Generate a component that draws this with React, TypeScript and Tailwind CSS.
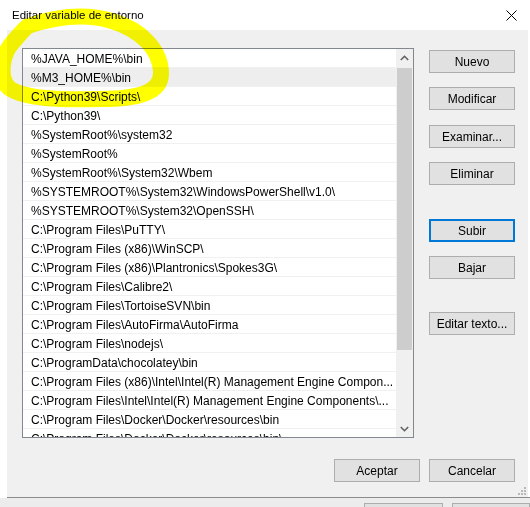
import React from "react";

const rows = [
  "%JAVA_HOME%\\bin",
  "%M3_HOME%\\bin",
  "C:\\Python39\\Scripts\\",
  "C:\\Python39\\",
  "%SystemRoot%\\system32",
  "%SystemRoot%",
  "%SystemRoot%\\System32\\Wbem",
  "%SYSTEMROOT%\\System32\\WindowsPowerShell\\v1.0\\",
  "%SYSTEMROOT%\\System32\\OpenSSH\\",
  "C:\\Program Files\\PuTTY\\",
  "C:\\Program Files (x86)\\WinSCP\\",
  "C:\\Program Files (x86)\\Plantronics\\Spokes3G\\",
  "C:\\Program Files\\Calibre2\\",
  "C:\\Program Files\\TortoiseSVN\\bin",
  "C:\\Program Files\\AutoFirma\\AutoFirma",
  "C:\\Program Files\\nodejs\\",
  "C:\\ProgramData\\chocolatey\\bin",
  "C:\\Program Files (x86)\\Intel\\Intel(R) Management Engine Compon...",
  "C:\\Program Files\\Intel\\Intel(R) Management Engine Components\\...",
  "C:\\Program Files\\Docker\\Docker\\resources\\bin",
  "C:\\Program Files\\Docker\\Docker\\resources\\bin\\",
];

function Btn({ label, focused, className = "" }: { label: string; focused?: boolean; className?: string }) {
  return (
    <div
      className={
        "w-[86px] h-[23px] flex items-center justify-center bg-[#e1e1e1] text-[12px] text-black " +
        (focused ? "border-2 border-[#0078d7] " : "border border-[#adadad] ") +
        className
      }
    >
      {label}
    </div>
  );
}

export default function App() {
  return (
    <div className="relative w-[530px] h-[507px] bg-white overflow-hidden font-['Liberation_Sans',Arial,sans-serif] text-black">
      {/* title bar */}
      <div className="h-[30px] flex items-center justify-between pl-[12px] pr-[12px]">
        <span className="text-[11.5px] leading-none pt-[1px]">Editar variable de entorno</span>
        <svg width="11" height="11" viewBox="0 0 11 11" className="mr-[1px]">
          <path d="M0.5 0.5 L10.5 10.5 M10.5 0.5 L0.5 10.5" stroke="#000" strokeWidth="1" />
        </svg>
      </div>

      {/* body */}
      <div className="relative ml-[7px] w-[521px] h-[467px] bg-[#f0f0f0] flex flex-col pl-[15px] pt-[18px]">
        <div className="flex">
          {/* list box */}
          <div className="w-[392px] h-[390px] border border-[#828790] bg-white flex overflow-hidden">
            <div className="flex-1 flex flex-col overflow-hidden">
              {rows.map((r, i) => (
                <div
                  key={i}
                  className={
                    "h-[19px] shrink-0 border-b border-[#f0f0f0] pl-[8px] flex items-center text-[12px] whitespace-nowrap " +
                    (i === 1 ? "bg-[#eeeeee]" : "")
                  }
                >
                  <span className="pt-[1px]">{r}</span>
                </div>
              ))}
            </div>
            {/* scrollbar */}
            <div className="w-[17px] bg-[#f0f0f0] flex flex-col items-center">
              <div className="h-[17px] w-full flex items-center justify-center">
                <svg width="9" height="6" viewBox="0 0 9 6">
                  <path d="M0.8 5 L4.5 1.3 L8.2 5" stroke="#606060" strokeWidth="1.6" fill="none" />
                </svg>
              </div>
              <div className="mt-[2px] w-[15px] h-[282px] bg-[#cdcdcd]" />
              <div className="flex-1" />
              <div className="h-[17px] w-full flex items-center justify-center">
                <svg width="9" height="6" viewBox="0 0 9 6">
                  <path d="M0.8 1 L4.5 4.7 L8.2 1" stroke="#606060" strokeWidth="1.6" fill="none" />
                </svg>
              </div>
            </div>
          </div>

          {/* side buttons */}
          <div className="ml-[15px] pt-[2px] flex flex-col">
            <Btn label="Nuevo" />
            <Btn label="Modificar" className="mt-[14px]" />
            <Btn label="Examinar..." className="mt-[15px]" />
            <Btn label="Eliminar" className="mt-[14px]" />
            <Btn label="Subir" focused className="mt-[34px]" />
            <Btn label="Bajar" className="mt-[14px]" />
            <Btn label="Editar texto..." className="mt-[33px]" />
          </div>
        </div>

        {/* bottom buttons */}
        <div className="mt-[21px] flex justify-end gap-[9px] pr-[13px]">
          <Btn label="Aceptar" />
          <Btn label="Cancelar" />
        </div>

        {/* resize grip */}
        <svg width="8" height="8" viewBox="0 0 8 8" className="absolute right-[2px] bottom-[2px]">
          <rect x="6" y="0" width="2" height="2" fill="#b8b8b8" />
          <rect x="3" y="3" width="2" height="2" fill="#b8b8b8" />
          <rect x="6" y="3" width="2" height="2" fill="#b8b8b8" />
          <rect x="0" y="6" width="2" height="2" fill="#b8b8b8" />
          <rect x="3" y="6" width="2" height="2" fill="#b8b8b8" />
          <rect x="6" y="6" width="2" height="2" fill="#b8b8b8" />
        </svg>
      </div>

      {/* bottom edge / parent window peek */}
      <div className="ml-[7px] h-[1px] bg-[#8c8c8c]" />
      <div className="h-[9px] bg-[#ececec] flex">
        <div className="ml-[364px] mt-[5px] w-[85px] h-[10px] border border-[#adadad] bg-[#e1e1e1]" />
        <div className="ml-[9px] mt-[5px] w-[85px] h-[10px] border border-[#adadad] bg-[#e1e1e1]" />
      </div>

      {/* yellow highlighter */}
      <svg
        className="absolute left-0 top-0 pointer-events-none mix-blend-multiply"
        width="530"
        height="507"
        viewBox="0 0 530 507"
      >
        <path
          d="M28 26 C55 17 85 13 112 21 C142 30 160 50 161 72 C162 92 140 99 100 99 C60 100 25 99 9 88 C-1 78 1 55 13 42 C19 35 23 30 28 26 Z"
          stroke="#ffff00"
          strokeWidth="16"
          fill="none"
          strokeLinejoin="round"
        />
      </svg>
    </div>
  );
}
